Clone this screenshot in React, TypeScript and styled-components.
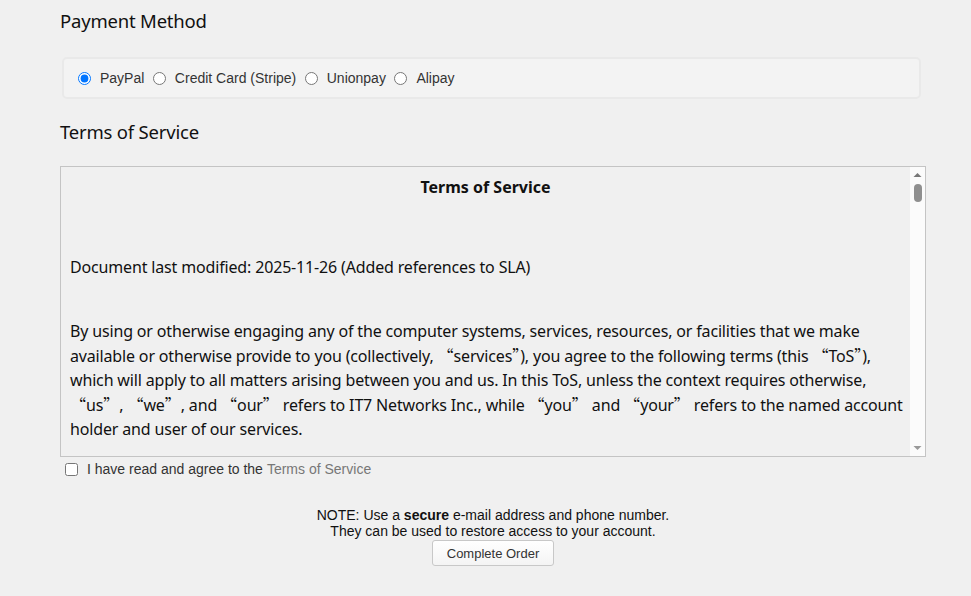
import React from 'react';
import styled, { createGlobalStyle } from 'styled-components';

const GlobalStyle = createGlobalStyle`
  html, body {
    margin: 0;
    padding: 0;
    background: #f0f0f0;
  }
  body {
    font-family: "Liberation Sans", Arial, sans-serif;
    font-size: 14px;
    color: #333;
  }
`;

const Page = styled.div`
  width: 866px;
  margin-left: 60px;
  padding-top: 9px;
`;

const SectionTitle = styled.h3`
  margin: 0;
  font-family: "Noto Sans", "Open Sans", sans-serif;
  font-weight: 400;
  font-size: 18.5px;
  line-height: 24px;
  color: #111;
  letter-spacing: -0.2px;
`;

const MethodBox = styled.div`
  margin: 24px 5px 0 2px;
  height: 38px;
  display: flex;
  align-items: center;
  padding: 0 14px;
  background: #f3f3f3;
  border: 2px solid #e9e9e9;
  border-radius: 5px;
`;

const RadioLabel = styled.label`
  display: inline-flex;
  align-items: center;
  font-size: 14px;
  color: #333;
  margin-right: 8.5px;

  input {
    margin: 0 9px 0 0;
    width: 13px;
    height: 13px;
  }
`;

const TosTitle = styled(SectionTitle)`
  margin-top: 21px;
`;

const TosBox = styled.div`
  margin-top: 22px;
  height: 289px;
  display: flex;
  border: 1px solid #c4c4c4;
  background: #f0f0f0;
`;

const TosContent = styled.div`
  flex: 1;
  overflow: hidden;
  padding: 0 3px 0 9px;
  font-family: "Noto Sans", "Open Sans", sans-serif;
  font-size: 16px;
  line-height: 24px;
  letter-spacing: -0.16px;
  color: #111;
`;

const ScrollTrack = styled.div`
  width: 15px;
  background: #fbfbfb;
  display: flex;
  flex-direction: column;
  align-items: center;
`;

const ScrollArrow = styled.svg`
  display: block;
  flex: none;
`;

const ScrollThumb = styled.div`
  width: 8px;
  height: 18px;
  margin-top: 2px;
  border-radius: 4px;
  background: #8f8f8f;
`;

const Spacer = styled.div`
  flex: 1;
`;

const DocTitle = styled.p`
  margin: 8px 6px 0 0;
  text-align: center;
  font-weight: 700;
  letter-spacing: 0;
`;

const Para = styled.p<{ $gap: number }>`
  margin: ${(p) => p.$gap}px 0 0;
`;

const Q = styled.span`
  font-family: "Noto Sans CJK SC", sans-serif;
  letter-spacing: 0;
`;

const AgreeRow = styled.label`
  display: flex;
  align-items: center;
  margin-top: 4px;
  padding-left: 5px;
  font-size: 14px;
  color: #333;

  input {
    margin: 0 9px 0 0;
    width: 13px;
    height: 13px;
  }
`;

const TosLink = styled.a`
  color: #777;
  text-decoration: none;
  margin-left: 4px;
`;

const Footer = styled.div`
  margin-top: 30px;
  display: flex;
  flex-direction: column;
  align-items: center;
  font-size: 14px;
  line-height: 16px;
  color: #111;
`;

const OrderButton = styled.button`
  margin-top: 1px;
  height: 26px;
  padding: 0 14px;
  font-family: "Liberation Sans", Arial, sans-serif;
  font-size: 13px;
  color: #333;
  background: linear-gradient(#ffffff, #f4f4f4);
  border: 1px solid #c8c8c8;
  border-radius: 3px;
`;

const methods = ['PayPal', 'Credit Card (Stripe)', 'Unionpay', 'Alipay'];

export default function App() {
  return (
    <>
      <GlobalStyle />
      <Page>
        <SectionTitle>Payment Method</SectionTitle>
        <MethodBox>
          {methods.map((m, i) => (
            <RadioLabel key={m}>
              <input type="radio" name="method" defaultChecked={i === 0} />
              {m}
            </RadioLabel>
          ))}
        </MethodBox>

        <TosTitle>Terms of Service</TosTitle>
        <TosBox>
          <TosContent>
            <DocTitle>Terms of Service</DocTitle>
            <Para $gap={56}>Document last modified: 2025-11-26 (Added references to SLA)</Para>
            <Para $gap={40}>
              By using or otherwise engaging any of the computer systems, services, resources, or
              facilities that we make available or otherwise provide to you (collectively,{' '}
              <Q>“</Q>services<Q>”</Q>), you agree to the following terms (this <Q>“</Q>ToS<Q>”</Q>),
              which will apply to all matters arising between you and us. In this ToS, unless the
              context requires otherwise, <Q>“</Q>us<Q>”</Q>, <Q>“</Q>we<Q>”</Q>, and{' '}
              <Q>“</Q>our<Q>”</Q> refers to IT7 Networks Inc., while <Q>“</Q>you<Q>”</Q> and{' '}
              <Q>“</Q>your<Q>”</Q> refers to the named account holder and user of our services.
            </Para>
          </TosContent>
          <ScrollTrack>
            <ScrollArrow width="15" height="15" viewBox="0 0 15 15">
              <polygon points="3.5,10 11.5,10 7.5,6" fill="#777" />
            </ScrollArrow>
            <ScrollThumb />
            <Spacer />
            <ScrollArrow width="15" height="15" viewBox="0 0 15 15">
              <polygon points="3.5,5 11.5,5 7.5,9" fill="#999" />
            </ScrollArrow>
          </ScrollTrack>
        </TosBox>

        <AgreeRow>
          <input type="checkbox" />
          I have read and agree to the<TosLink href="#">Terms of Service</TosLink>
        </AgreeRow>

        <Footer>
          <div>
            NOTE: Use a <b>secure</b> e-mail address and phone number.
          </div>
          <div>They can be used to restore access to your account.</div>
          <OrderButton>Complete Order</OrderButton>
        </Footer>
      </Page>
    </>
  );
}
